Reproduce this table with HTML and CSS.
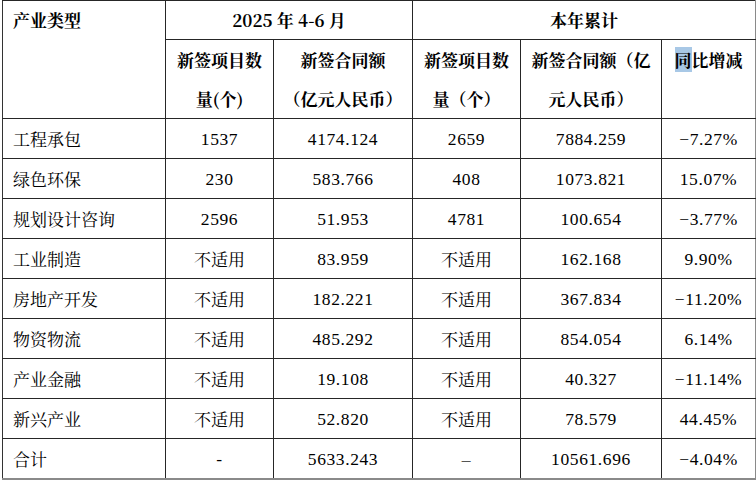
FILE: index.html
```html
<!DOCTYPE html>
<html lang="zh">
<head>
<meta charset="utf-8">
<link rel="stylesheet" href="styles.css">
</head>
<body>
<table class="t">
  <colgroup>
    <col class="c0"><col class="c1"><col class="c2"><col class="c3"><col class="c4"><col class="c5">
  </colgroup>
  <thead>
    <tr class="h1">
      <th rowspan="2" class="type">产业类型</th>
      <th colspan="2" class="grp">2025 年 4-6 月</th>
      <th colspan="3" class="grp">本年累计</th>
    </tr>
    <tr class="h2">
      <th>新签项目数<br>量(个)</th>
      <th>新签合同额<br>（亿元人民币）</th>
      <th>新签项目数<br>量（个）</th>
      <th>新签合同额（亿<br>元人民币）</th>
      <th><span class="sel">同</span>比增减</th>
    </tr>
  </thead>
  <tbody>
    <tr><td class="name">工程承包</td><td class="num">1537</td><td class="num">4174.124</td><td class="num">2659</td><td class="num">7884.259</td><td class="num">−7.27%</td></tr>
    <tr><td class="name">绿色环保</td><td class="num">230</td><td class="num">583.766</td><td class="num">408</td><td class="num">1073.821</td><td class="num">15.07%</td></tr>
    <tr><td class="name">规划设计咨询</td><td class="num">2596</td><td class="num">51.953</td><td class="num">4781</td><td class="num">100.654</td><td class="num">−3.77%</td></tr>
    <tr><td class="name">工业制造</td><td>不适用</td><td class="num">83.959</td><td>不适用</td><td class="num">162.168</td><td class="num">9.90%</td></tr>
    <tr><td class="name">房地产开发</td><td>不适用</td><td class="num">182.221</td><td>不适用</td><td class="num">367.834</td><td class="num">−11.20%</td></tr>
    <tr><td class="name">物资物流</td><td>不适用</td><td class="num">485.292</td><td>不适用</td><td class="num">854.054</td><td class="num">6.14%</td></tr>
    <tr><td class="name">产业金融</td><td>不适用</td><td class="num">19.108</td><td>不适用</td><td class="num">40.327</td><td class="num">−11.14%</td></tr>
    <tr><td class="name">新兴产业</td><td>不适用</td><td class="num">52.820</td><td>不适用</td><td class="num">78.579</td><td class="num">44.45%</td></tr>
    <tr class="total"><td class="name">合计</td><td class="num">-</td><td class="num">5633.243</td><td class="num dash">–</td><td class="num">10561.696</td><td class="num">−4.04%</td></tr>
  </tbody>
</table>
</body>
</html>
```

FILE: styles.css
```css
html, body {
  margin: 0;
  padding: 0;
  background: #ffffff;
}
body {
  font-family: "Noto Serif CJK SC", "Noto Sans CJK SC", serif;
  color: #000;
}
.t {
  margin-left: 2px;
  border-collapse: collapse;
  table-layout: fixed;
  width: 753px;
  border-top: 1px solid #8a8a8a;
  border-bottom: 2px solid #8a8a8a;
}
.c0 { width: 163px; }
.c1 { width: 108px; }
.c2 { width: 139px; }
.c3 { width: 108px; }
.c4 { width: 141px; }
.c5 { width: 94px; }
.t th, .t td {
  border: 1px solid #262626;
  padding: 0;
  text-align: center;
  font-size: 17px;
}
.t th {
  font-weight: 700;
  vertical-align: top;
  line-height: 38px;
}
.h1 { height: 39px; }
.h2 th {
  line-height: 39px;
  height: 78px;
  white-space: nowrap;
}
.t th.type {
  text-align: left;
  padding-left: 10px;
}
.sel {
  background: #a8c8e6;
}
.t td {
  height: 39px;
  vertical-align: middle;
  line-height: 20px;
}
.t td.name {
  text-align: left;
  padding-left: 10px;
}
.t td.num {
  font-family: "Liberation Serif", "Noto Sans CJK SC", serif;
  font-size: 17.5px;
  letter-spacing: 0.6px;
}
.t td.dash {
  color: #555;
}
.t tr > :first-child { border-left-color: #333; }
.t tr > :last-child { border-right-color: #8a8a8a; }
```
